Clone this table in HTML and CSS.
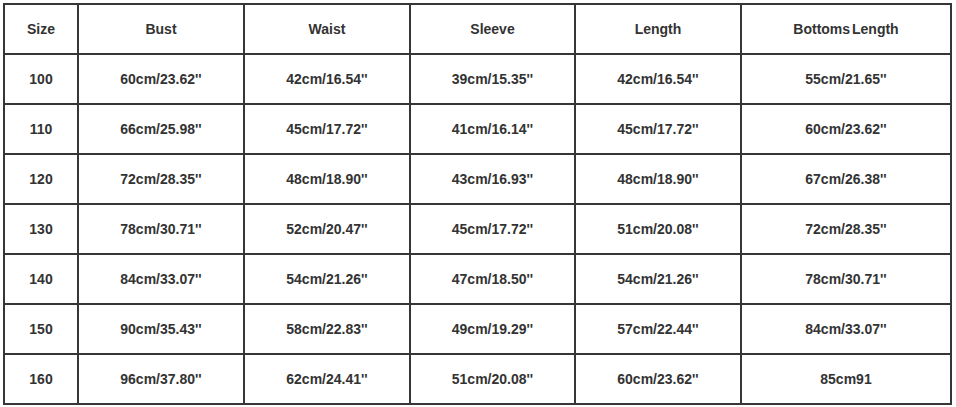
FILE: index.html
```html
<!DOCTYPE html>
<html>
<head>
<meta charset="utf-8">
<link rel="stylesheet" href="styles.css">
</head>
<body>
<div class="chart">
  <div class="cell">Size</div><div class="cell">Bust</div><div class="cell">Waist</div><div class="cell">Sleeve</div><div class="cell">Length</div><div class="cell tight">Bottoms Length</div>
  <div class="cell">100</div><div class="cell">60cm/23.62''</div><div class="cell">42cm/16.54''</div><div class="cell">39cm/15.35''</div><div class="cell">42cm/16.54''</div><div class="cell">55cm/21.65''</div>
  <div class="cell">110</div><div class="cell">66cm/25.98''</div><div class="cell">45cm/17.72''</div><div class="cell">41cm/16.14''</div><div class="cell">45cm/17.72''</div><div class="cell">60cm/23.62''</div>
  <div class="cell">120</div><div class="cell">72cm/28.35''</div><div class="cell">48cm/18.90''</div><div class="cell">43cm/16.93''</div><div class="cell">48cm/18.90''</div><div class="cell">67cm/26.38''</div>
  <div class="cell">130</div><div class="cell">78cm/30.71''</div><div class="cell">52cm/20.47''</div><div class="cell">45cm/17.72''</div><div class="cell">51cm/20.08''</div><div class="cell">72cm/28.35''</div>
  <div class="cell">140</div><div class="cell">84cm/33.07''</div><div class="cell">54cm/21.26''</div><div class="cell">47cm/18.50''</div><div class="cell">54cm/21.26''</div><div class="cell">78cm/30.71''</div>
  <div class="cell">150</div><div class="cell">90cm/35.43''</div><div class="cell">58cm/22.83''</div><div class="cell">49cm/19.29''</div><div class="cell">57cm/22.44''</div><div class="cell">84cm/33.07''</div>
  <div class="cell">160</div><div class="cell">96cm/37.80''</div><div class="cell">62cm/24.41''</div><div class="cell">51cm/20.08''</div><div class="cell">60cm/23.62''</div><div class="cell">85cm91</div>
</div>
</body>
</html>
```
FILE: styles.css
```css
html, body {
  margin: 0;
  padding: 0;
  background: #ffffff;
}
body {
  padding: 3px;
}
.chart {
  display: grid;
  grid-template-columns: 72px 164px 164px 163px 164px 208px;
  grid-auto-rows: 48px;
  gap: 2px;
  padding: 2px;
  background: #363636;
  width: max-content;
}
.cell {
  background: #ffffff;
  display: flex;
  align-items: center;
  justify-content: center;
  font-family: "Liberation Sans", Arial, sans-serif;
  font-weight: bold;
  font-size: 14px;
  color: #333333;
}
.tight {
  word-spacing: -2px;
}
```
